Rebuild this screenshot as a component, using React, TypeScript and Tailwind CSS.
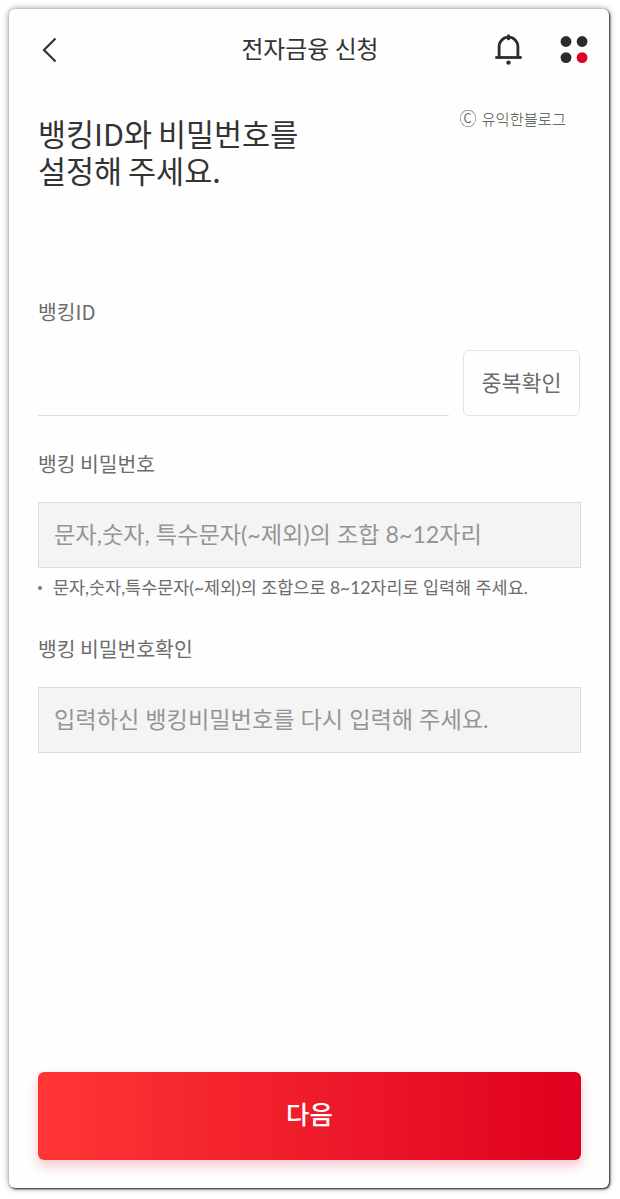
import React from 'react';

const BellIcon = () => (
  <svg width="28" height="32" viewBox="0 0 28 32" fill="none">
    <path d="M4.1 23V12.6a9.4 9.4 0 0 1 18.8 0V23" stroke="#2b2b2b" strokeWidth="2.8" />
    <path d="M0.3 23.5h26.4" stroke="#2b2b2b" strokeWidth="2.8" />
    <path d="M13.5 1.7v3" stroke="#2b2b2b" strokeWidth="3" strokeLinecap="round" />
    <circle cx="13.5" cy="28.6" r="2.2" fill="#2b2b2b" />
  </svg>
);

const MenuIcon = () => (
  <svg width="28" height="28" viewBox="0 0 28 28">
    <circle cx="6" cy="5.5" r="5.4" fill="#2b2b2b" />
    <circle cx="22.1" cy="5.5" r="5.4" fill="#2b2b2b" />
    <circle cx="6" cy="21.6" r="5.4" fill="#2b2b2b" />
    <circle cx="22.1" cy="21.6" r="5.4" fill="#e1001f" />
  </svg>
);

const Header = () => (
  <header className="flex h-[80px] items-center justify-between pl-[33px] pr-[21px] pt-[1px]">
    <button type="button" aria-label="이전" className="w-[85px]">
      <svg width="16" height="26" viewBox="0 0 16 26" fill="none">
        <path d="M13.5 1.5L2 13l11.5 11.5" stroke="#333" strokeWidth="2.2" />
      </svg>
    </button>
    <h1 className="-ml-[2px] -mt-[4px] text-[23.9px] leading-[36px]">전자금융 신청</h1>
    <div className="flex items-center gap-[37px]">
      <BellIcon />
      <MenuIcon />
    </div>
  </header>
);

type PasswordFieldProps = {
  id: string;
  label: string;
  placeholder: string;
};

const PasswordField = ({ id, label, placeholder }: PasswordFieldProps) => (
  <div>
    <label htmlFor={id} className="block text-[20.4px] leading-[28px] text-[#6c6c6c]">
      {label}
    </label>
    <input
      id={id}
      type="password"
      placeholder={placeholder}
      className="mt-[25px] block h-[66px] w-full border border-[#dcdcdc] bg-[#f4f4f4] px-[15px] pb-[3px] font-[Lato,'Noto_Sans_CJK_KR',sans-serif] text-[23.2px] text-[#333] placeholder:text-[#959595]"
    />
  </div>
);

export default function App() {
  return (
    <div className="h-[1199px] bg-white pl-[9px] pt-[9px] font-['Noto_Sans_CJK_KR',sans-serif] text-[#333]">
      <main className="flex h-[1179px] w-[600px] flex-col rounded-[6px] bg-[#fefefe] shadow-[1px_1px_2px_#222,0_0_6px_rgba(0,0,0,0.45)]">
        <Header />

        <div className="flex items-start justify-between pl-[29px] pr-[43px] pt-[26px]">
          <h2 className="text-[30.5px] leading-[37px] [word-spacing:-1px]">
            뱅킹ID와 비밀번호를
            <br />
            설정해 주세요.
          </h2>
          <p className="-mt-[8px] flex items-center gap-[5px] text-[15.3px] font-light leading-[22px] text-[#3f5040]">
            <span className="text-[17px]">Ⓒ</span>
            유익한블로그
          </p>
        </div>

        <form className="flex flex-1 flex-col pl-[29px] pr-[28px] pt-[108px]">
          <label htmlFor="banking-id" className="block text-[20.4px] leading-[28px] text-[#6c6c6c]">
            뱅킹ID
          </label>
          <div className="mt-[25px] flex gap-[14px]">
            <input id="banking-id" className="h-[66px] w-[411px] border-b border-[#dfdfdf] text-[23.2px]" />
            <button type="button" className="h-[66px] w-[117px] rounded-[6px] border border-[#e2e2e2] pb-[2px] text-[21.8px] text-[#6c6c6c]">
              중복확인
            </button>
          </div>

          <div className="mt-[33px]">
            <PasswordField
              id="password"
              label="뱅킹 비밀번호"
              placeholder="문자,숫자, 특수문자(~제외)의 조합 8~12자리"
            />
            <p className="mt-[7px] flex items-center font-[Lato,'Noto_Sans_CJK_KR',sans-serif] text-[17.45px] leading-[26px] text-[#6c6c6c]">
              <span className="mr-[11px] h-1 w-1 rounded-full bg-[#777]" />
              문자,숫자,특수문자(~제외)의 조합으로 8~12자리로 입력해 주세요.
            </p>
          </div>

          <div className="mt-[33px]">
            <PasswordField
              id="password-confirm"
              label="뱅킹 비밀번호확인"
              placeholder="입력하신 뱅킹비밀번호를 다시 입력해 주세요."
            />
          </div>

          <button
            type="submit"
            className="mb-[28px] mt-auto h-[88px] w-full rounded-[6px] bg-linear-to-r/srgb from-[#ff3636] to-[#df001f] pb-[5px] text-[25.5px] font-medium text-white shadow-[0_6px_12px_rgba(225,0,35,0.22)]"
          >
            다음
          </button>
        </form>
      </main>
    </div>
  );
}
